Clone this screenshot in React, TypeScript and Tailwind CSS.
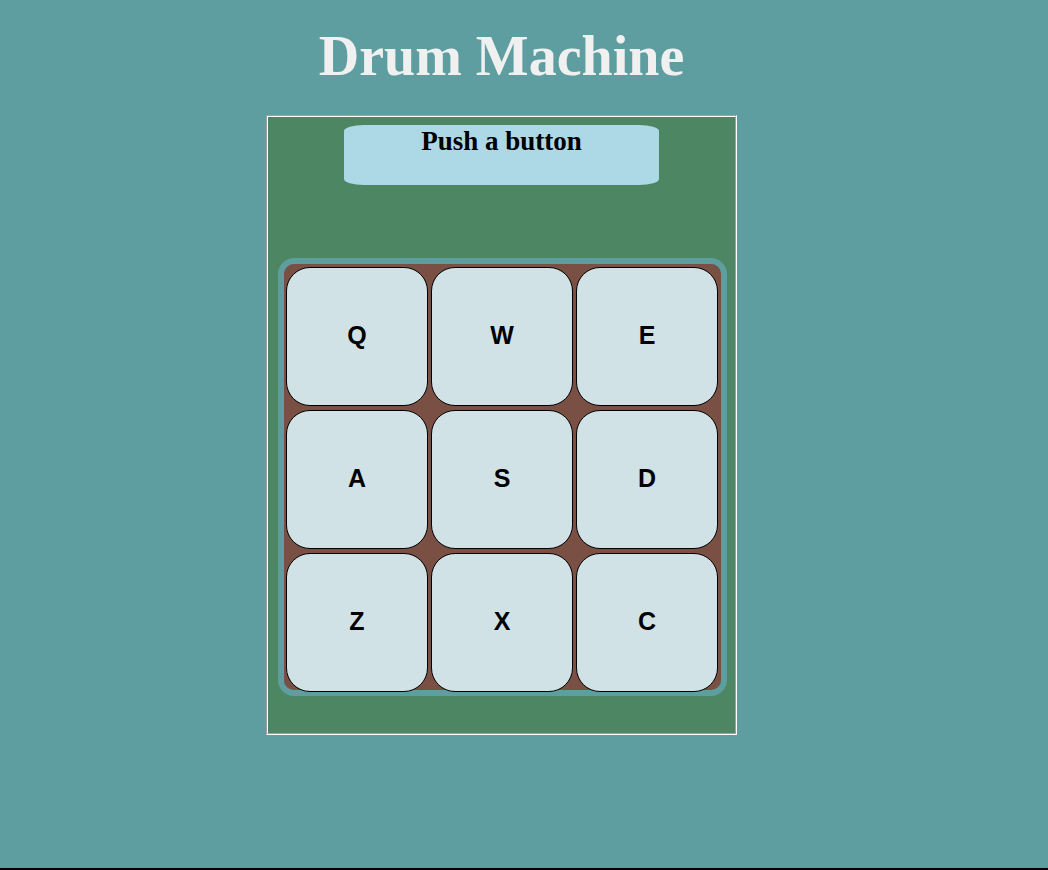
import React from 'react';

const KEYS = ['Q', 'W', 'E', 'A', 'S', 'D', 'Z', 'X', 'C'];

const DrumPad = ({ label }: { label: string }) => {
  return (
    <div className="w-[142px] h-[139px] bg-[#d0e2e5] border border-black rounded-[24px] flex items-center justify-center pb-[2px]">
      <span className="text-[25px] font-bold text-black font-['Liberation_Sans',Arial,sans-serif]">
        {label}
      </span>
    </div>
  );
};

const App = () => {
  return (
    <div className="h-[870px] bg-[#5f9ea0] border-b-2 border-black overflow-hidden">
      <div className="w-[1003px] flex flex-col items-center pt-[24px]">
        {/* Title */}
        <h1 className="text-[56px] leading-[64px] font-bold text-[#f0f0f0] font-['Liberation_Serif','Times_New_Roman',serif] mb-[27px]">
          Drum Machine
        </h1>

        {/* Machine body, groove border */}
        <div className="border [border-color:#a0a0a0_#ffffff_#ffffff_#a0a0a0]">
          <div className="w-[469px] h-[618px] bg-[#4c8662] border [border-color:#ffffff_#a0a0a0_#a0a0a0_#ffffff] flex flex-col items-center">
            {/* Display */}
            <div className="mt-[8px] w-[315px] h-[60px] bg-[#add8e6] rounded-[20px/6px] flex justify-center">
              <p className="-mt-[4px] text-[27px] font-bold text-black font-['Liberation_Serif','Times_New_Roman',serif] leading-normal">
                Push a button
              </p>
            </div>

            {/* Pad */}
            <div className="mt-[73px] ml-[2px] border-[6px] border-[#5f9ea0] rounded-[16px]">
              <div className="w-[437px] h-[426px] bg-[#7a5044] rounded-[10px] pt-[3px] pl-[2px] grid grid-cols-[142px_142px_142px] auto-rows-[139px] gap-x-[3px] gap-y-[4px]">
                {KEYS.map((k) => (
                  <DrumPad key={k} label={k} />
                ))}
              </div>
            </div>
          </div>
        </div>
      </div>
    </div>
  );
};

export default App;
